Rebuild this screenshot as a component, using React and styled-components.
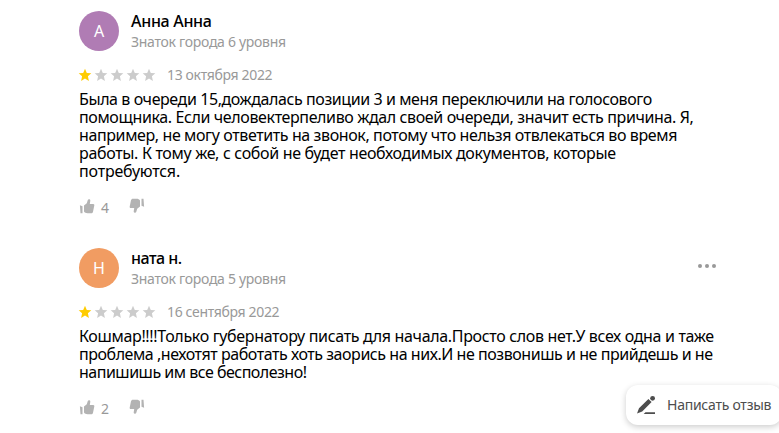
import React from "react";
import styled, { createGlobalStyle } from "styled-components";

const GlobalStyle = createGlobalStyle`
  body {
    margin: 0;
    overflow: hidden;
    background-color: #ffffff;
    font-family: "Noto Sans", "Open Sans", sans-serif;
  }
`;

const Page = styled.main`
  position: relative;
  box-sizing: border-box;
  height: 433px;
  padding: 11px 63px 0 79px;
  overflow: hidden;
`;

const StyledReview = styled.article`
  height: ${(props) => props.$height};
`;

const Header = styled.header`
  display: flex;
  align-items: center;
  height: 40px;
`;

const Avatar = styled.div`
  display: flex;
  justify-content: center;
  align-items: center;
  width: 40px;
  height: 40px;
  margin-right: 12px;
  border-radius: 50%;
  background-color: ${(props) => props.$color};
  color: #ffffff;
  font-size: 16px;
`;

const Author = styled.div`
  flex: 1;
`;

const Name = styled.p`
  margin: 0;
  font-size: 16px;
  font-weight: 500;
  line-height: 20px;
  color: #000000;
  letter-spacing: ${(props) => props.$spacing};
`;

const Level = styled.p`
  margin: 0;
  padding-top: 1px;
  font-size: 14px;
  line-height: 20px;
  color: #999999;
  letter-spacing: -0.29px;
`;

const MenuButton = styled.button`
  display: flex;
  gap: 3px;
  padding: 0;
  margin-top: -4px;
  border: none;
  background: none;
`;

const Dot = styled.span`
  width: 4px;
  height: 4px;
  border-radius: 50%;
  background-color: #999999;
`;

const Rating = styled.div`
  display: flex;
  align-items: center;
  height: 18px;
  margin-top: 15px;
`;

const Stars = styled.div`
  display: flex;
  gap: 4px;
  margin-right: 12px;
`;

const StyledStar = styled.svg`
  width: 12px;
  height: 12px;
  overflow: visible;
  fill: ${(props) => (props.$filled ? "#ffcc00" : "#cccccc")};
`;

const PostDate = styled.span`
  font-size: 14px;
  line-height: 18px;
  color: #999999;
  letter-spacing: -0.35px;
`;

const Text = styled.p`
  margin: 6px 0 0;
  font-size: 16px;
  line-height: 18px;
  color: #000000;
`;

const Line = styled.span`
  display: block;
  white-space: nowrap;
  letter-spacing: ${(props) => props.$spacing};
`;

const Reactions = styled.div`
  display: flex;
  align-items: center;
  height: 16px;
  margin-top: 18px;
`;

const Thumb = styled.svg`
  width: 16px;
  height: 16px;
  fill: #b3b3b3;
  transform: ${(props) => (props.$down ? "rotate(180deg)" : "none")};
`;

const Count = styled.span`
  width: 28px;
  margin-left: 6px;
  padding-top: 3px;
  font-size: 14px;
  line-height: 16px;
  color: #999999;
`;

const WriteButton = styled.button`
  position: absolute;
  top: 385px;
  left: 626px;
  display: flex;
  align-items: center;
  gap: 11px;
  width: 156px;
  height: 40px;
  padding: 0 0 1px 10px;
  border: none;
  border-radius: 12px;
  background-color: #ffffff;
  box-shadow: 0 2px 6px rgba(0, 0, 0, 0.2);
  font-family: inherit;
  font-size: 14px;
  letter-spacing: -0.25px;
  color: #4d4d4d;
  white-space: nowrap;
`;

const reviews = [
  {
    name: "Анна Анна",
    nameSpacing: "-0.3px",
    letter: "А",
    color: "#b07cb4",
    level: "Знаток города 6 уровня",
    date: "13 октября 2022",
    rating: 1,
    likes: 4,
    height: "237px",
    lines: [
      ["Была в очереди 15,дождалась позиции 3 и меня переключили на голосового", "-0.415px"],
      ["помощника. Если человектерпеливо ждал своей очереди, значит есть причина. Я,", "-0.38px"],
      ["например, не могу ответить на звонок, потому что нельзя отвлекаться во время", "-0.39px"],
      ["работы. К тому же, с собой не будет необходимых документов, которые", "-0.33px"],
      ["потребуются.", "-0.2px"],
    ],
  },
  {
    name: "ната н.",
    nameSpacing: "-0.5px",
    letter: "Н",
    color: "#f19c62",
    level: "Знаток города 5 уровня",
    date: "16 сентября 2022",
    rating: 1,
    likes: 2,
    height: "auto",
    menu: true,
    lines: [
      ["Кошмар!!!!Только губернатору писать для начала.Просто слов нет.У всех одна и таже", "-0.335px"],
      ["проблема ,нехотят работать хоть заорись на них.И не позвонишь и не прийдешь и не", "-0.45px"],
      ["напишишь им все бесполезно!", "-0.5px"],
    ],
  },
];

function Star({ filled }) {
  return (
    <StyledStar $filled={filled} viewBox="0 0 12 12">
      <path d="M6-.3l1.8 4.2 4.5.4-3.4 3 1 4.6L6 9.5l-3.900 2.400 1-4.600L-.3 4.300l4.500-.4z" />
    </StyledStar>
  );
}

function ThumbIcon({ down }) {
  return (
    <Thumb $down={down} viewBox="0 0 16 16">
      <path d="M.9 7.300L3.500 8.300V15.300H1.500zM5 7.500L7.800 5.300 8.800 1.900C9.100.9 11.500.9 11.300 2.700L10.800 6H14.200C15.200 6 15.500 6.800 15.300 7.600L14 13.700C13.800 14.700 13 15.300 12 15.300H8.500C7 15.300 5.500 14.800 5 13.600z" />
    </Thumb>
  );
}

function Review({ review }) {
  return (
    <StyledReview $height={review.height}>
      <Header>
        <Avatar $color={review.color}>{review.letter}</Avatar>
        <Author>
          <Name $spacing={review.nameSpacing}>{review.name}</Name>
          <Level>{review.level}</Level>
        </Author>
        {review.menu && (
          <MenuButton aria-label="Меню">
            <Dot />
            <Dot />
            <Dot />
          </MenuButton>
        )}
      </Header>
      <Rating>
        <Stars>
          {[1, 2, 3, 4, 5].map((n) => (
            <Star key={n} filled={n <= review.rating} />
          ))}
        </Stars>
        <PostDate>{review.date}</PostDate>
      </Rating>
      <Text>
        {review.lines.map(([line, spacing]) => (
          <Line key={line} $spacing={spacing}>
            {line}
          </Line>
        ))}
      </Text>
      <Reactions>
        <ThumbIcon />
        <Count>{review.likes}</Count>
        <ThumbIcon down />
      </Reactions>
    </StyledReview>
  );
}

export default function App() {
  return (
    <>
      <GlobalStyle />
      <Page>
        {reviews.map((review) => (
          <Review key={review.name} review={review} />
        ))}
        <WriteButton>
          <svg width="20" height="20" viewBox="0 0 20 20" fill="#4d4d4d">
            <path d="M1 18.500L3 13.300 12.400 3.900 15.600 7.100 6.200 16.500zM9.500 17.200H19V19H7.700z" />
            <circle cx="16.600" cy="3.300" r="2.400" />
          </svg>
          Написать отзыв
        </WriteButton>
      </Page>
    </>
  );
}
